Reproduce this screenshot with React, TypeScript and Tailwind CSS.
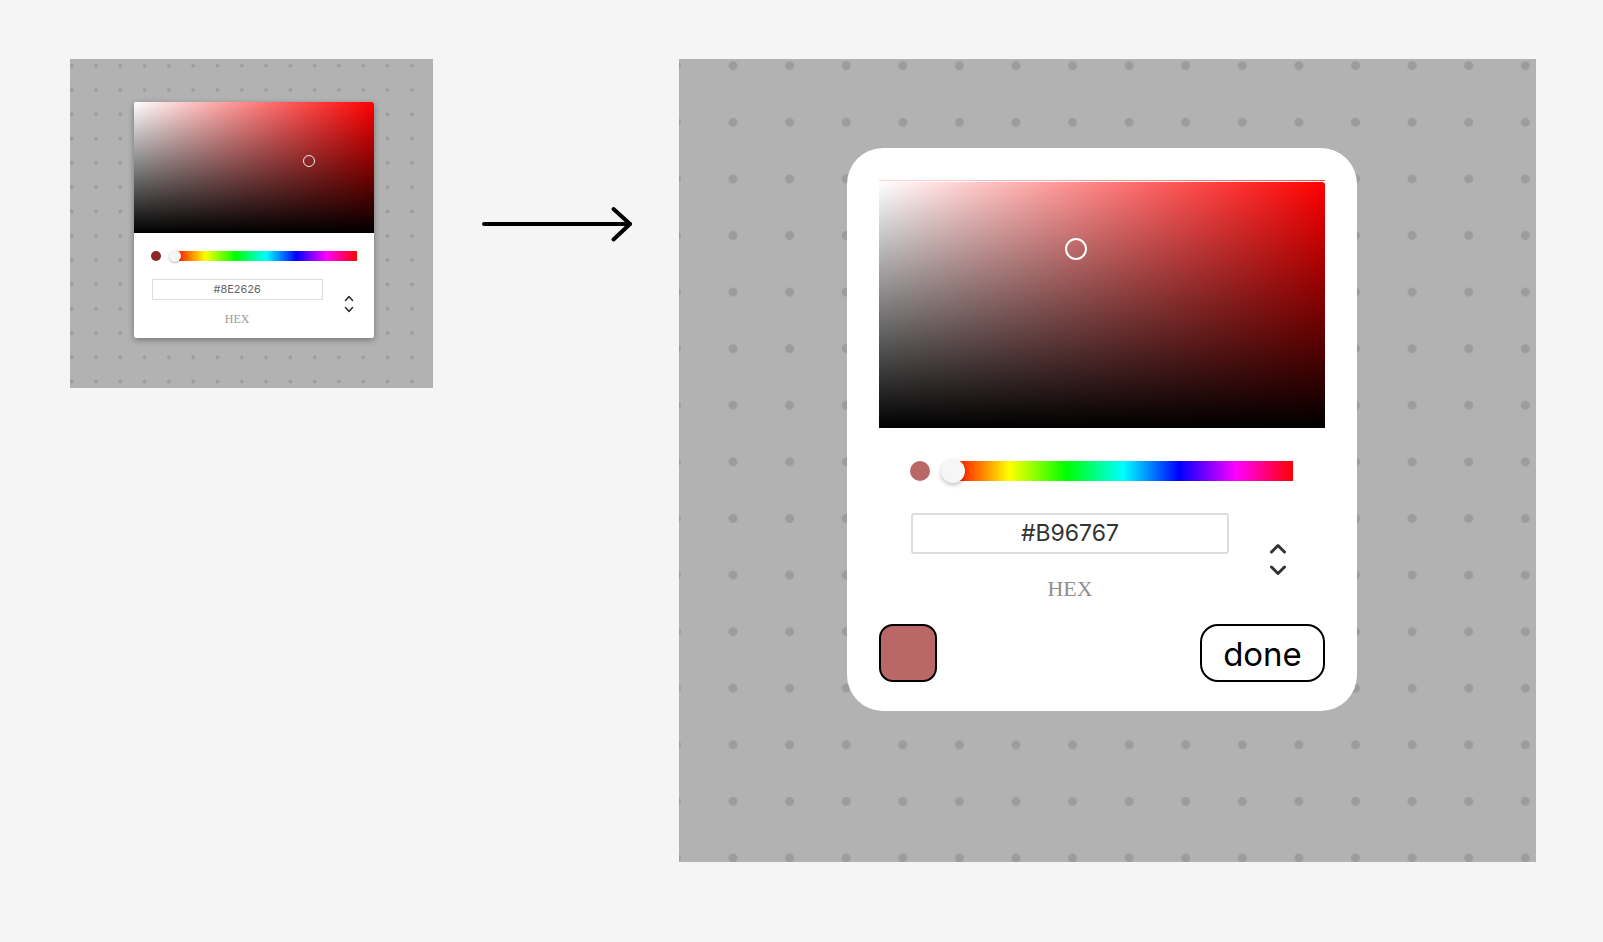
import React from "react";

const HUE =
  "bg-[linear-gradient(to_right,#f00_0%,#ff0_16.6%,#0f0_33.3%,#0ff_50%,#00f_66.6%,#f0f_83.3%,#f00_100%)]";

// SV field for hue 0: white -> red horizontally, fading to black downward
function SatField({ className, children }: { className?: string; children?: React.ReactNode }) {
  return (
    <div className={`relative bg-[linear-gradient(to_right,#fff,#f00)] ${className ?? ""}`}>
      <div className="absolute inset-0 rounded-[inherit] bg-[linear-gradient(to_bottom,transparent,#000)]" />
      {children}
    </div>
  );
}

function Chevrons({ big }: { big?: boolean }) {
  if (big) {
    return (
      <svg width="20" height="34" viewBox="0 0 20 34" className="shrink-0">
        <polyline points="3.5,9 10,2.5 16.5,9" fill="none" stroke="#333" strokeWidth="3" strokeLinecap="round" strokeLinejoin="round" />
        <polyline points="3.5,24 10,30.5 16.5,24" fill="none" stroke="#333" strokeWidth="3" strokeLinecap="round" strokeLinejoin="round" />
      </svg>
    );
  }
  return (
    <svg width="10" height="20" viewBox="0 0 10 20" className="shrink-0">
      <polyline points="1.5,6.5 5,2.5 8.5,6.5" fill="none" stroke="#333" strokeWidth="1.6" strokeLinecap="round" strokeLinejoin="round" />
      <polyline points="1.5,13.5 5,17.5 8.5,13.5" fill="none" stroke="#333" strokeWidth="1.6" strokeLinecap="round" strokeLinejoin="round" />
    </svg>
  );
}

function SmallPicker() {
  return (
    <div className="h-[236px] w-[240px] rounded-[2px] bg-white shadow-[0_2px_6px_rgba(0,0,0,0.35)]">
      <SatField className="h-[131px] rounded-t-[2px]">
        <div className="absolute left-[169px] top-[52.7px] size-[12px] rounded-full border-[1.5px] border-[#eee]" />
      </SatField>

      <div className="mt-[17px] flex h-[12px] items-center pl-[17.4px] pr-[17px]">
        <div className="size-[10px] shrink-0 rounded-full bg-[#8e2626]" />
        <div className={`relative ml-[13.3px] h-[10px] flex-1 ${HUE}`}>
          <div className="absolute -left-[6px] top-1/2 size-[12px] -translate-y-1/2 rounded-full bg-[#f6f6f6] shadow-[0_1px_2px_rgba(0,0,0,0.3)]" />
        </div>
      </div>

      <div className="mt-[17px] flex items-start">
        <div className="ml-[17.7px] w-[171px]">
          <div className="flex h-[21px] items-center justify-center border border-[#ddd] text-[11px] text-[#666]">
            #8E2626
          </div>
          <div className="mt-[12px] text-center font-['Liberation_Serif',serif] text-[12px] leading-[14px] text-[#999]">
            HEX
          </div>
        </div>
        <div className="ml-[21px] mt-[15px]">
          <Chevrons />
        </div>
      </div>
    </div>
  );
}

function BigPicker() {
  return (
    <div className="h-[563px] w-[510px] rounded-[36px] bg-white px-8 pt-8">
      <div className="h-px bg-[linear-gradient(to_right,#ffd9d9,#ff4d4d)]" />
      <SatField className="mt-px h-[246px] rounded-tr-[3px]">
        <div className="absolute left-[185.5px] top-[56.4px] size-[22px] rounded-full border-2 border-white" />
      </SatField>

      <div className="mt-[31px] flex h-[24px] items-center pl-[31px] pr-[32px]">
        <div className="size-[20px] shrink-0 rounded-full bg-[#b96767]" />
        <div className={`relative ml-[23px] h-[20px] flex-1 ${HUE}`}>
          <div className="absolute -left-[12px] top-1/2 size-[24px] -translate-y-1/2 rounded-full bg-[#f6f6f6] shadow-[0_2px_4px_rgba(0,0,0,0.25)]" />
        </div>
      </div>

      <div className="mt-[30px] flex items-center">
        <div className="ml-[32px] w-[318px]">
          <div className="flex h-[41px] items-center justify-center rounded-[3px] border-2 border-[#ddd] text-[23px] text-[#333]">
            #B96767
          </div>
          <div className="mt-[22px] text-center font-['Liberation_Serif',serif] text-[22px] leading-[26px] text-[#8f8f8f]">
            HEX
          </div>
        </div>
        <div className="ml-[39px] mt-[4px]">
          <Chevrons big />
        </div>
      </div>

      <div className="mt-[22px] flex items-center justify-between">
        <div className="size-[58px] rounded-[14px] border-2 border-black bg-[#b96767]" />
        <button
          type="button"
          className="flex h-[58px] w-[125px] items-center justify-center rounded-[18px] border-2 border-black pt-[2px] text-[33px] leading-none text-black"
        >
          done
        </button>
      </div>
    </div>
  );
}

function Arrow() {
  return (
    <svg width="156" height="40" viewBox="0 0 156 40" className="shrink-0">
      <line x1="4" y1="20" x2="150" y2="20" stroke="#000" strokeWidth="4" strokeLinecap="round" />
      <polyline points="133.5,5 150,20 133.5,35.5" fill="none" stroke="#000" strokeWidth="4" strokeLinecap="round" strokeLinejoin="round" />
    </svg>
  );
}

export default function App() {
  return (
    <div className="flex h-[942px] w-full items-start bg-[#f5f5f5] pl-[70px] pt-[59px] font-['Inter',sans-serif]">
      <div className="h-[329px] w-[363px] shrink-0 bg-[#b2b2b2] bg-[radial-gradient(circle,#9c9c9c_1.6px,transparent_2.2px)] bg-[length:24.3px_24.3px] bg-[position:13.85px_18.85px] pl-[64px] pt-[43px]">
        <SmallPicker />
      </div>

      <div className="ml-[47px] mt-[145px]">
        <Arrow />
      </div>

      <div className="ml-[43px] h-[803px] w-[857px] shrink-0 bg-[#b2b2b2] bg-[radial-gradient(circle,#9c9c9c_4px,transparent_4.9px)] bg-[length:56.6px_56.6px] bg-[position:25.7px_35px] pl-[168px] pt-[89px]">
        <BigPicker />
      </div>
    </div>
  );
}
